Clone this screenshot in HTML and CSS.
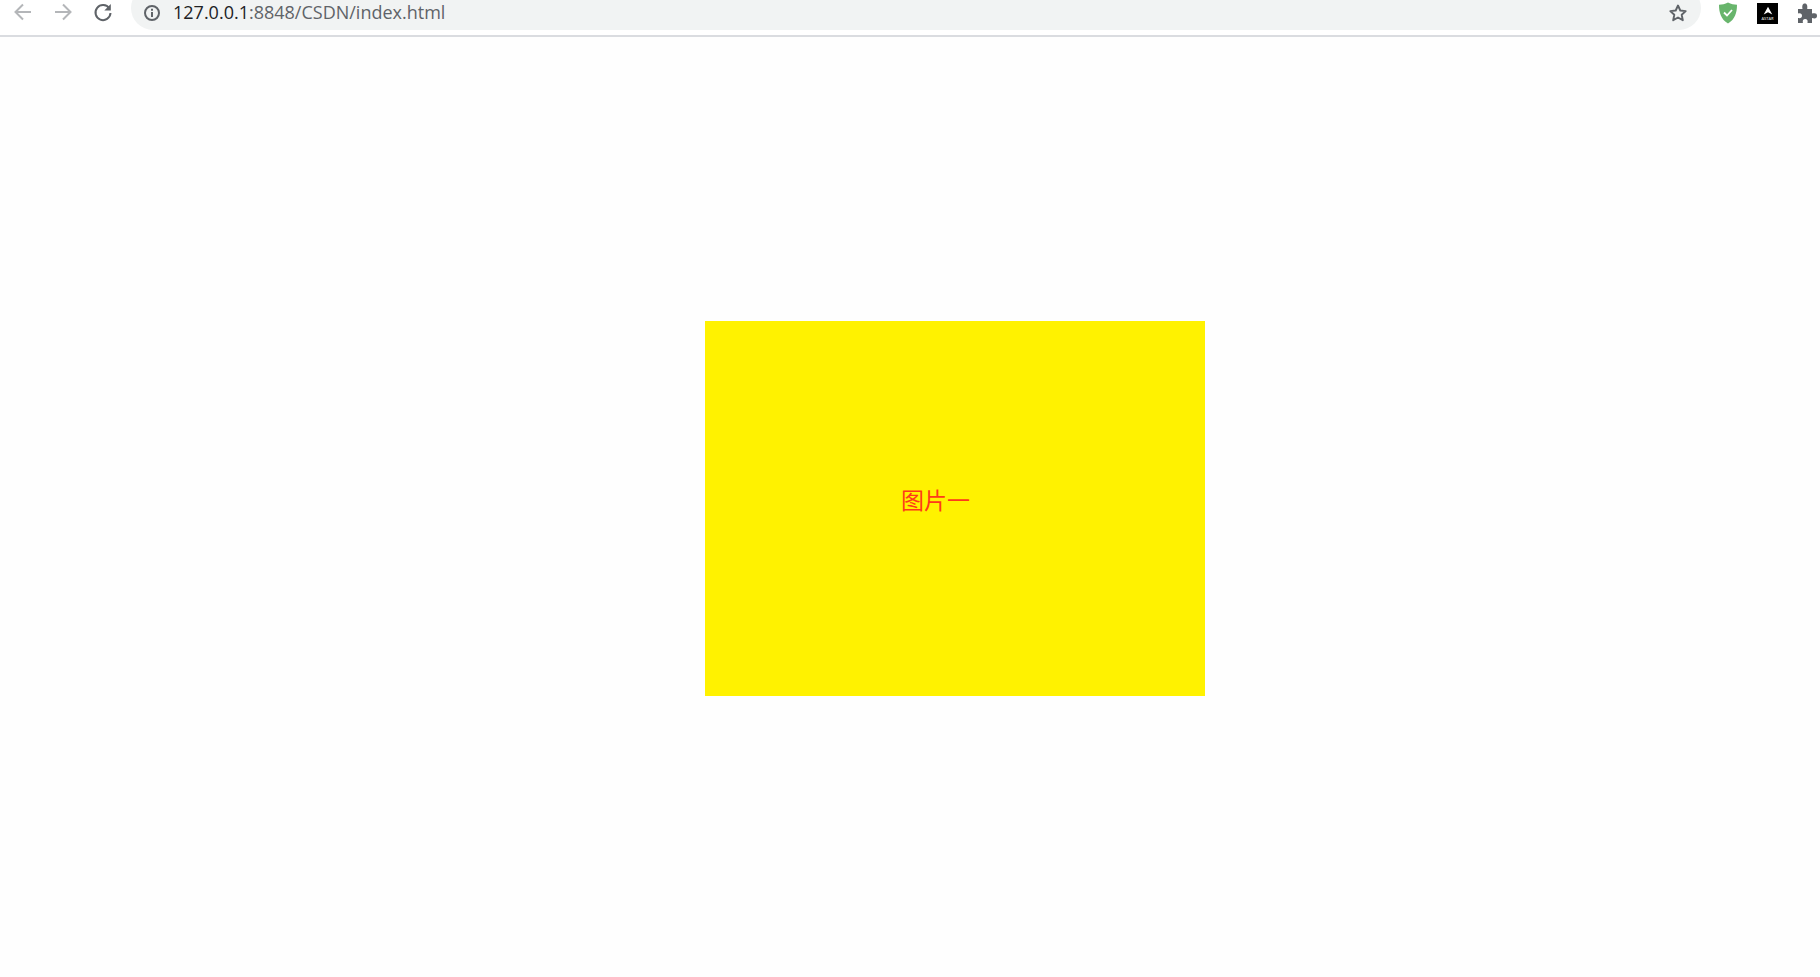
FILE: index.html
```html
<!DOCTYPE html>
<html lang="zh">
<head>
    <meta charset="UTF-8">
    <title>index.html</title>
    <link rel="stylesheet" href="styles.css">
</head>
<body>
    <div class="toolbar">
        <div class="nav-btn">
            <svg width="22" height="22" viewBox="0 0 22 22"><path d="M19 11H4M11 3.5L3.5 11l7.500 7.500" fill="none" stroke="#b4b6b9" stroke-width="2"/></svg>
        </div>
        <div class="nav-btn">
            <svg width="22" height="22" viewBox="0 0 22 22"><path d="M3 11h15M11 3.500l7.500 7.500-7.500 7.500" fill="none" stroke="#b4b6b9" stroke-width="2"/></svg>
        </div>
        <div class="nav-btn">
            <svg width="22" height="22" viewBox="0 0 22 22"><path d="M17.300 7.500A7.500 7.500 0 1 0 18.500 12" fill="none" stroke="#5f6368" stroke-width="2"/><path d="M18.800 3v6.500h-6.500z" fill="#5f6368"/></svg>
        </div>
        <div class="address-bar">
            <svg class="info-icon" width="18" height="18" viewBox="0 0 18 18"><circle cx="9" cy="9" r="7" fill="none" stroke="#5f6368" stroke-width="2"/><path d="M8 8h2v5H8zM8 4.800h2v2H8z" fill="#5f6368"/></svg>
            <span class="url"><span class="url-host">127.0.0.1</span>:8848/CSDN/index.html</span>
            <svg class="star-icon" width="20" height="20" viewBox="0 0 20 20"><path d="M10 2.500l2.300 5 5.400.6-4 3.700 1.100 5.400-4.800-2.700-4.800 2.700 1.100-5.400-4-3.700 5.400-.6z" fill="none" stroke="#5f6368" stroke-width="1.900" stroke-linejoin="round"/></svg>
        </div>
        <div class="extensions">
            <svg width="22" height="24" viewBox="0 0 22 24"><path d="M11 1.500c3 1.500 6 2.200 9 2.300 0 8-2 14.500-9 18.700C4 18.300 2 11.800 2 3.800c3-.1 6-.8 9-2.300z" fill="#68b56c"/><path d="M7 11.500l3 3 5-5.500" fill="none" stroke="#fff" stroke-width="1.800"/></svg>
            <div class="astar-icon">
                <svg width="12" height="10" viewBox="0 0 14 10"><path d="M7 0l5 9-5-2.500L2 9z" fill="#fff"/></svg>
                <span class="astar-label">ASTAR</span>
            </div>
            <svg width="22" height="22" viewBox="0 0 22 22"><path d="M2 7h4.500C5.800 3 7 1.500 8.800 1.500S11.800 3 11.200 7H16v4.500c3.500-.7 5-.2 5 2.300s-1.500 3-5 2.300V21h-4.500c.6-3-.4-4-2.300-4s-2.900 1-2.300 4H2v-5c2.800.5 4-.5 4-2.300s-1.200-2.800-4-2.200z" fill="#5f6368"/></svg>
        </div>
    </div>

    <div class="page">
        <div class="picture">图片一</div>
    </div>
</body>
</html>
```

FILE: styles.css
```css
* {
    margin: 0;
    padding: 0;
    box-sizing: border-box;
}

body {
    background: #fefefe;
    font-family: "Open Sans", "Noto Sans CJK SC", sans-serif;
}

.toolbar {
    display: flex;
    align-items: flex-start;
    height: 37px;
    padding-left: 3px;
    background: #fff;
    border-bottom: 2px solid #dadce0;
    overflow: hidden;
}

.nav-btn {
    display: flex;
    width: 40px;
    justify-content: center;
    margin-top: 1px;
}

.address-bar {
    display: flex;
    align-items: center;
    flex: none;
    width: 1570px;
    height: 44px;
    margin: -14px 0 0 8px;
    padding: 10px 13px 0 12px;
    background: #f1f3f3;
    border-radius: 22px;
}

.info-icon {
    flex: none;
}

.url {
    margin: 0 0 2px 12px;
    font-size: 18px;
    color: #5f6368;
    white-space: nowrap;
}

.url-host {
    color: #202124;
}

.star-icon {
    margin-left: auto;
}

.extensions {
    display: flex;
    align-items: center;
    gap: 18px;
    margin-left: 16px;
    padding-top: 1px;
}

.astar-icon {
    display: flex;
    flex-direction: column;
    align-items: center;
    justify-content: center;
    width: 21px;
    height: 21px;
    background: #000;
}

.astar-label {
    font-size: 4px;
    line-height: 5px;
    color: #fff;
}

.page {
    padding: 284px 0 0 705px;
}

.picture {
    width: 500px;
    height: 375px;
    padding: 161px 0 0 196px;
    background: #fff200;
    color: #ff3a1a;
    font-size: 23px;
    line-height: 36px;
}
```
